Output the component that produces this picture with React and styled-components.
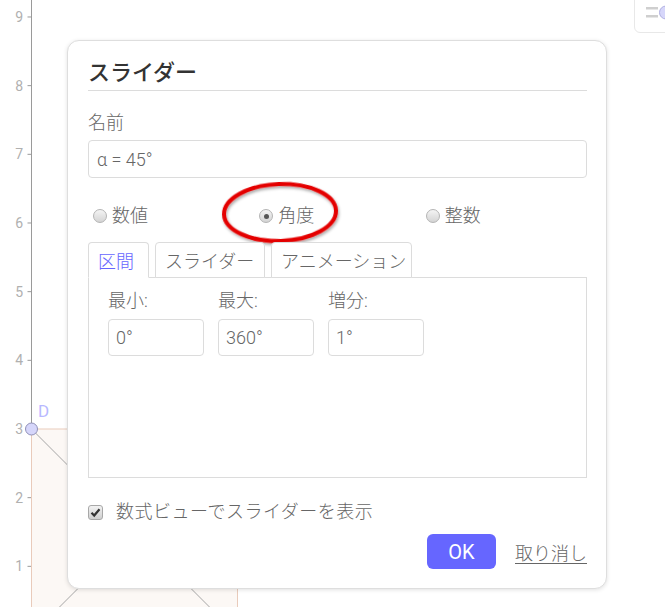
import React from 'react';
import styled, { createGlobalStyle } from 'styled-components';

const GlobalStyle = createGlobalStyle`
  body {
    margin: 0;
    font-family: "Roboto", "Noto Sans CJK JP", sans-serif;
  }
`;

const Page = styled.div`
  position: relative;
  width: 665px;
  height: 607px;
  overflow: hidden;
  background: #fff;
`;

const Graph = styled.svg`
  position: absolute;
  inset: 0;
`;

const StyleBarToggle = styled.div`
  position: absolute;
  top: -6px;
  left: 634px;
  width: 44px;
  height: 39px;
  box-sizing: border-box;
  border: 1px solid #e8e8e8;
  border-radius: 6px;
  background: #fff;
`;

const Dialog = styled.div`
  position: absolute;
  left: 67px;
  top: 40px;
  width: 540px;
  box-sizing: border-box;
  padding: 0 19px 19px 20px;
  background: #fff;
  border: 1px solid #dedede;
  border-radius: 12px;
  box-shadow: 0 1px 4px rgba(0, 0, 0, 0.12);
  color: #666;
  font-size: 18px;
  font-weight: 300;
`;

const Title = styled.h2`
  margin: 0;
  padding-top: 15px;
  font-size: 22px;
  font-weight: 500;
  line-height: 34px;
  color: #333;
  border-bottom: 1px solid #dcdcdc;
`;

const Label = styled.div`
  margin-top: ${p => p.$top || 0}px;
  line-height: 24px;
`;

const TextField = styled.div`
  margin-top: ${p => p.$top || 0}px;
  width: ${p => (p.$w ? `${p.$w}px` : '100%')};
  height: ${p => p.$h || 38}px;
  box-sizing: border-box;
  padding-left: ${p => p.$pad || 8}px;
  display: flex;
  align-items: center;
  border: 1px solid #dcdcdc;
  border-radius: 4px;
  color: #666;
`;

const RadioRow = styled.div`
  margin-top: 26px;
  display: grid;
  grid-template-columns: repeat(3, 1fr);
  height: 24px;
`;

const RadioItem = styled.label`
  display: flex;
  align-items: center;
  gap: 5px;
  padding-left: 5px;
  line-height: 24px;
`;

const RadioDot = styled.span`
  width: 14px;
  height: 14px;
  box-sizing: border-box;
  border-radius: 50%;
  border: 1px solid #b4b4b4;
  background: linear-gradient(#f4f4f4, #d4d4d4);
  display: flex;
  align-items: center;
  justify-content: center;

  &::after {
    content: "";
    width: 5px;
    height: 5px;
    border-radius: 50%;
    background: ${p => (p.$on ? '#555' : 'transparent')};
  }
`;

const TabBar = styled.div`
  margin-top: 14px;
  margin-bottom: -1px;
  position: relative;
  z-index: 1;
  display: flex;
  gap: 6px;
`;

const Tab = styled.div`
  width: ${p => p.$w}px;
  height: 36px;
  box-sizing: border-box;
  padding-left: 9px;
  display: flex;
  align-items: center;
  border: 1px solid #dcdcdc;
  border-bottom-color: ${p => (p.$active ? '#fff' : '#dcdcdc')};
  border-radius: 4px 4px 0 0;
  background: #fff;
  color: ${p => (p.$active ? '#6666ff' : '#666')};
`;

const TabPanel = styled.div`
  height: 201px;
  box-sizing: border-box;
  border: 1px solid #dcdcdc;
  padding: 11px 19px 0;
  display: flex;
  gap: 14px;
`;

const Field = styled.div`
  display: flex;
  flex-direction: column;
`;

const CheckRow = styled.label`
  margin-top: 22px;
  display: flex;
  align-items: center;
  gap: 13px;
  line-height: 24px;
  letter-spacing: 0.5px;
`;

const CheckBox = styled.span`
  width: 15px;
  height: 15px;
  box-sizing: border-box;
  border: 1px solid #a8a8a8;
  border-radius: 3px;
  background: linear-gradient(#f2f2f2, #cfcfcf);
  display: flex;
  align-items: center;
  justify-content: center;
`;

const Buttons = styled.div`
  margin-top: 10px;
  display: flex;
  justify-content: flex-end;
  align-items: center;
  gap: 19px;
`;

const OkButton = styled.button`
  width: 69px;
  height: 35px;
  border: none;
  border-radius: 6px;
  background: #6666ff;
  color: #fff;
  font-family: "Roboto", sans-serif;
  font-size: 20px;
  cursor: pointer;
`;

const CancelLink = styled.span`
  color: #666;
  text-decoration: underline;
  text-underline-offset: 3px;
  cursor: pointer;
`;

const Annotation = styled.svg`
  position: absolute;
  left: 215px;
  top: 175px;
  overflow: visible;
`;

const U = 68.67;
const ORIGIN_Y = 429 + 3 * U;

function GraphView() {
  const ticks = [1, 2, 3, 4, 5, 6, 7, 8, 9];
  return (
    <Graph width="665" height="607">
      <line x1="31.5" y1="0" x2="31.5" y2="607" stroke="#9a9a9a" />
      {ticks.map(n => {
        const y = ORIGIN_Y - n * U;
        return (
          <g key={n}>
            <line x1="27.5" y1={y} x2="31.5" y2={y} stroke="#9a9a9a" />
            <text x="23" y={y + 5} textAnchor="end" fontSize="14" fill="#b0b0b0" fontFamily="Roboto, sans-serif">{n}</text>
          </g>
        );
      })}
      <rect x="31.5" y="429" width={3 * U} height={3 * U} fill="#fcf8f5" stroke="#e9cbbb" />
      <line x1="31.5" y1="429" x2={31.5 + 3 * U} y2={ORIGIN_Y} stroke="#a6a6a6" />
      <line x1={31.5 + 3 * U} y1="429" x2="31.5" y2={ORIGIN_Y} stroke="#a6a6a6" />
      <circle cx="31.5" cy="429" r="6" fill="#d6d6fa" stroke="#9090b8" />
      <text x="38" y="417" fontSize="17" fill="#b8b8ff" fontFamily="Roboto, sans-serif">D</text>
    </Graph>
  );
}

export default function App() {
  return (
    <Page>
      <GlobalStyle />
      <GraphView />
      <StyleBarToggle>
        <svg width="44" height="39">
          <rect x="11" y="12" width="12" height="2.5" fill="#cfcfcf" />
          <rect x="11" y="20" width="12" height="2.5" fill="#cfcfcf" />
          <circle cx="31" cy="17.5" r="6.5" fill="#d6d6fa" stroke="#b0b0e0" />
        </svg>
      </StyleBarToggle>

      <Dialog>
        <Title>スライダー</Title>
        <Label $top={20}>名前</Label>
        <TextField $top={5}>α = 45°</TextField>

        <RadioRow>
          <RadioItem><RadioDot />数値</RadioItem>
          <RadioItem><RadioDot $on />角度</RadioItem>
          <RadioItem><RadioDot />整数</RadioItem>
        </RadioRow>

        <TabBar>
          <Tab $w={61} $active>区間</Tab>
          <Tab $w={110}>スライダー</Tab>
          <Tab $w={141}>アニメーション</Tab>
        </TabBar>
        <TabPanel>
          <Field>
            <Label>最小:</Label>
            <TextField $top={6} $w={96} $h={37} $pad={7}>0°</TextField>
          </Field>
          <Field>
            <Label>最大:</Label>
            <TextField $top={6} $w={96} $h={37} $pad={7}>360°</TextField>
          </Field>
          <Field>
            <Label>増分:</Label>
            <TextField $top={6} $w={96} $h={37} $pad={7}>1°</TextField>
          </Field>
        </TabPanel>

        <CheckRow>
          <CheckBox>
            <svg width="11" height="11" viewBox="0 0 11 11">
              <path d="M1.5 5.8 L4.2 8.5 L9.5 2.2" fill="none" stroke="#333" strokeWidth="2.2" />
            </svg>
          </CheckBox>
          数式ビューでスライダーを表示
        </CheckRow>

        <Buttons>
          <OkButton>OK</OkButton>
          <CancelLink>取り消し</CancelLink>
        </Buttons>
      </Dialog>

      <Annotation width="130" height="80">
        <defs>
          <filter id="shadow" x="-20%" y="-20%" width="140%" height="150%">
            <feDropShadow dx="1" dy="2" stdDeviation="1.5" floodColor="#000" floodOpacity="0.35" />
          </filter>
        </defs>
        <ellipse cx="65" cy="37.5" rx="56" ry="28.5" fill="none" stroke="#e40000" strokeWidth="4" filter="url(#shadow)" transform="rotate(-2 65 37.5)" />
      </Annotation>
    </Page>
  );
}
